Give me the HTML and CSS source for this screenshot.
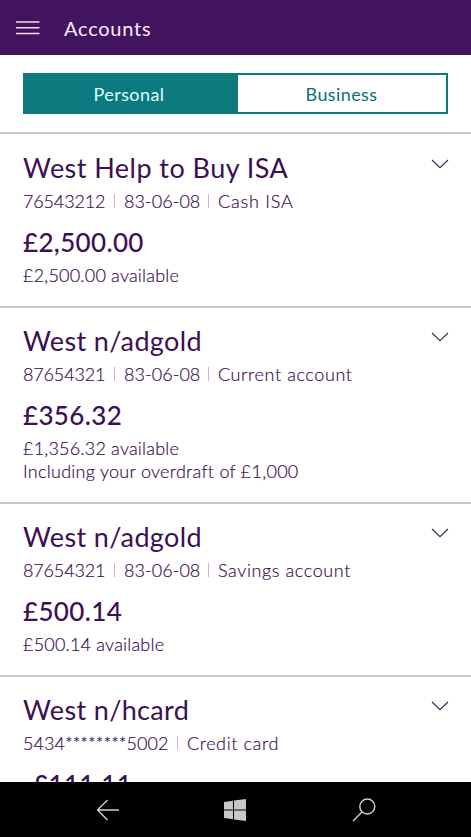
FILE: index.html
```html
<!DOCTYPE html>
<html lang="en">
<head>
<meta charset="utf-8">
<title>Accounts</title>
<link rel="stylesheet" href="styles.css">
</head>
<body>
<div class="app">
  <header class="header">
    <svg class="menu" width="24" height="14" viewBox="0 0 24 14"><path d="M0 1H23.5M0 6.7H23.5M0 12.5H23.5"/></svg>
    <h1 class="heading">Accounts</h1>
  </header>
  <nav class="tabs">
    <div class="tab active">Personal</div>
    <div class="tab business">Business</div>
  </nav>
  <main class="list">
    <section class="card first">
      <div class="row"><h2 class="title isa">West Help to Buy ISA</h2><svg class="chevron" width="18" height="10" viewBox="0 0 18 10"><path d="M1 1L9 8.6L17 1"/></svg></div>
      <div class="meta"><span class="number">76543212</span><i class="sep"></i><span class="sort">83-06-08</span><i class="sep"></i><span class="kind cash">Cash ISA</span></div>
      <div class="amount">£2,500.00</div>
      <div class="available">£2,500.00 available</div>
    </section>
    <section class="card overdrawn">
      <div class="row"><h2 class="title">West n/adgold</h2><svg class="chevron" width="18" height="10" viewBox="0 0 18 10"><path d="M1 1L9 8.6L17 1"/></svg></div>
      <div class="meta"><span class="number">87654321</span><i class="sep"></i><span class="sort">83-06-08</span><i class="sep"></i><span class="kind">Current account</span></div>
      <div class="amount">£356.32</div>
      <div class="available">£1,356.32 available</div>
      <div class="available overdraft">Including your overdraft of £1,000</div>
    </section>
    <section class="card">
      <div class="row"><h2 class="title">West n/adgold</h2><svg class="chevron" width="18" height="10" viewBox="0 0 18 10"><path d="M1 1L9 8.6L17 1"/></svg></div>
      <div class="meta"><span class="number">87654321</span><i class="sep"></i><span class="sort">83-06-08</span><i class="sep"></i><span class="kind">Savings account</span></div>
      <div class="amount">£500.14</div>
      <div class="available">£500.14 available</div>
    </section>
    <section class="card">
      <div class="row"><h2 class="title">West n/hcard</h2><svg class="chevron" width="18" height="10" viewBox="0 0 18 10"><path d="M1 1L9 8.6L17 1"/></svg></div>
      <div class="meta"><span class="number long">5434********5002</span><i class="sep"></i><span class="kind">Credit card</span></div>
      <div class="amount">-£111.11</div>
    </section>
  </main>
  <footer class="navbar">
    <svg width="24" height="22" viewBox="0 0 24 22"><path class="line" d="M11.5 1L1.5 11L11.5 21M1.5 11H23"/></svg>
    <svg class="windows" width="22" height="22" viewBox="0 0 22 22"><path class="solid" d="M0 3L9 1.7V10.4H0ZM10 1.6L22 0V10.4H10ZM0 11.4H9V20.2L0 19ZM10 11.4H22V22L10 20.4Z"/></svg>
    <svg width="24" height="24" viewBox="0 0 24 24"><circle class="line" cx="15.3" cy="8.5" r="7.5"/><path class="line" d="M10 14L1 23"/></svg>
  </footer>
</div>
</body>
</html>
```
FILE: styles.css
```css
* { box-sizing: border-box; }
body { margin: 0; font-family: Lato, "Open Sans", sans-serif; color: #3c1053; background: #fff; }
h1, h2 { margin: 0; font-weight: 400; }
.app { width: 471px; height: 837px; display: flex; flex-direction: column; overflow: hidden; }
.header { height: 55px; flex: none; background: #42145f; display: flex; align-items: center; gap: 24px; padding: 1px 16px 0; }
.menu path { fill: none; stroke: #f3d9f5; stroke-width: 1.4; }
.heading { font-size: 20px; line-height: 24px; color: #fbeafd; letter-spacing: .75px; }
.tabs { height: 41px; flex: none; margin: 18px 23px; border: 2px solid #0d7a80; display: flex; }
.tab { flex: 1; display: flex; align-items: center; justify-content: center; font-size: 18px; letter-spacing: .4px; color: #0d6f77; }
.active { background: #0d7a80; color: #dcffff; flex: 0 0 213px; padding-right: 5px; }
.business { padding-right: 1px; }
.list { flex: 1; min-height: 0; overflow: hidden; }
.card { height: 173px; border-top: 2px solid #cbcbcb; padding: 16px 22px 0 23px; }
.first { height: 174px; padding-top: 17px; }
.overdrawn { height: 196px; }
.row { display: flex; justify-content: space-between; height: 34px; }
.title { font-size: 27px; line-height: 34px; letter-spacing: .35px; white-space: nowrap; }
.isa { letter-spacing: .45px; }
.chevron { margin-top: 8px; flex: none; }
.chevron path { fill: none; stroke: #42284f; stroke-width: 1.2; }
.meta { display: flex; align-items: center; height: 24px; margin-top: 4px; font-size: 18px; font-weight: 300; white-space: nowrap; -webkit-text-stroke: .2px #3c1053; }
.number { width: 82px; letter-spacing: -.15px; }
.long { width: 145px; letter-spacing: .05px; }
.sort { width: 75px; letter-spacing: .05px; }
.kind { letter-spacing: .6px; }
.cash { letter-spacing: .8px; }
.sep { width: 1px; height: 14px; background: #c6b7cc; margin: 0 9px; flex: none; }
.amount { font-size: 26px; line-height: 32px; height: 32px; margin-top: 13px; font-weight: 500; letter-spacing: .35px; }
.available { font-size: 18px; line-height: 23px; font-weight: 300; margin-top: 6px; white-space: nowrap; letter-spacing: .2px; -webkit-text-stroke: .2px #3c1053; }
.overdraft { margin-top: 0; letter-spacing: .27px; }
.navbar { height: 55px; flex: none; background: #000; display: flex; align-items: center; justify-content: space-between; padding: 0 95px 0 96px; }
.windows { margin-right: 2px; }
.line { fill: none; stroke: #d0d0d0; stroke-width: 1.4; }
.solid { fill: #c8c8c8; }
```
